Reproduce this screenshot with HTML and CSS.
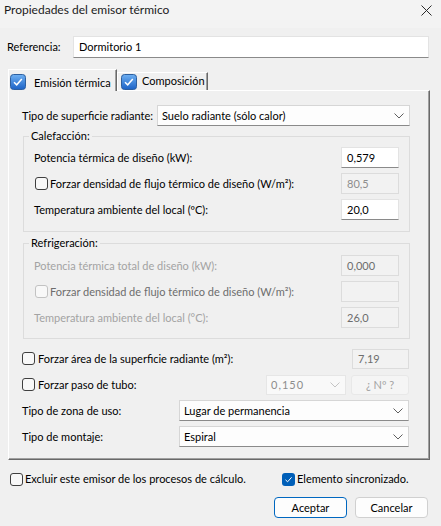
FILE: index.html
```html
<!DOCTYPE html>
<html>
<head>
    <meta charset="utf-8">
    <title>Propiedades del emisor térmico</title>
<link rel="stylesheet" href="styles.css">
</head>
<body>
    <div class="titlebar">
        <span>Propiedades del emisor térmico</span>
        <svg class="close" width="11" height="11" viewBox="0 0 11 11"><path d="M0.5 0.5 L10.5 10.5 M10.5 0.5 L0.5 10.5" stroke="#2b2b2b" stroke-width="1" fill="none"/></svg>
    </div>

    <div class="ref-row">
        <label>Referencia:</label>
        <div class="field ref-field">Dormitorio 1</div>
    </div>

    <!-- pestañas -->
    <div class="tabs">
        <div class="tab active">
            <svg class="tab-icon" width="16" height="16" viewBox="0 0 16 16">
                <defs><linearGradient id="tg" x1="0" y1="0" x2="0" y2="1"><stop offset="0" stop-color="#6fb0f2"/><stop offset="1" stop-color="#1c62c6"/></linearGradient></defs>
                <rect x="0.5" y="0.5" width="15" height="15" rx="3" fill="url(#tg)" stroke="#2d5f9f"/>
                <path d="M4 8.2 L6.7 10.8 L11.8 5" fill="none" stroke="#fff" stroke-width="1.5"/>
            </svg>
            <span>Emisión térmica</span>
        </div>
        <div class="tab">
            <svg class="tab-icon" width="16" height="16" viewBox="0 0 16 16">
                <rect x="0.5" y="0.5" width="15" height="15" rx="3" fill="url(#tg)" stroke="#2d5f9f"/>
                <path d="M4 8.2 L6.7 10.8 L11.8 5" fill="none" stroke="#fff" stroke-width="1.5"/>
            </svg>
            <span>Composición</span>
        </div>
    </div>

    <div class="panel">
        <div class="row">
            <span>Tipo de superficie radiante:</span>
            <div class="select surface">Suelo radiante (sólo calor)
                <svg width="10" height="6" viewBox="0 0 10 6"><path d="M0.5 0.5 L5 5 L9.5 0.5" stroke="#5f5f5f" fill="none"/></svg>
            </div>
        </div>

        <fieldset class="group heat">
            <legend>Calefacción:</legend>
            <div class="row">
                <span>Potencia térmica de diseño (kW):</span>
                <div class="field num">0,579</div>
            </div>
            <div class="row">
                <label class="check inset"><span class="box"></span>Forzar densidad de flujo térmico de diseño (W/m²):</label>
                <div class="field num off">80,5</div>
            </div>
            <div class="row">
                <span>Temperatura ambiente del local (ºC):</span>
                <div class="field num">20,0</div>
            </div>
        </fieldset>

        <fieldset class="group cool">
            <legend>Refrigeración:</legend>
            <div class="row grey">
                <span>Potencia térmica total de diseño (kW):</span>
                <div class="field num off dark">0,000</div>
            </div>
            <div class="row">
                <label class="check inset mid"><span class="box dis"></span>Forzar densidad de flujo térmico de diseño (W/m²):</label>
                <div class="field num off"></div>
            </div>
            <div class="row grey">
                <span>Temperatura ambiente del local (°C):</span>
                <div class="field num off dark">26,0</div>
            </div>
        </fieldset>

        <div class="opts">
            <div class="row">
                <label class="check"><span class="box"></span>Forzar área de la superficie radiante (m²):</label>
                <div class="field small off dark">7,19</div>
            </div>
            <div class="row">
                <label class="check"><span class="box"></span>Forzar paso de tubo:</label>
                <div class="pair">
                    <div class="select pitch">0,150
                        <svg width="10" height="6" viewBox="0 0 10 6"><path d="M0.5 0.5 L5 5 L9.5 0.5" stroke="#c4c4c4" fill="none"/></svg>
                    </div>
                    <div class="mini-btn">¿ Nº ?</div>
                </div>
            </div>
            <div class="row">
                <span>Tipo de zona de uso:</span>
                <div class="select long">Lugar de permanencia
                    <svg width="10" height="6" viewBox="0 0 10 6"><path d="M0.5 0.5 L5 5 L9.5 0.5" stroke="#5f5f5f" fill="none"/></svg>
                </div>
            </div>
            <div class="row">
                <span>Tipo de montaje:</span>
                <div class="select long">Espiral
                    <svg width="10" height="6" viewBox="0 0 10 6"><path d="M0.5 0.5 L5 5 L9.5 0.5" stroke="#5f5f5f" fill="none"/></svg>
                </div>
            </div>
        </div>
    </div>

    <div class="footer-checks">
        <label class="check"><span class="box"></span>Excluir este emisor de los procesos de cálculo.</label>
        <label class="check">
            <svg class="box-on" width="13" height="13" viewBox="0 0 13 13"><rect x="0" y="0" width="13" height="13" rx="3" fill="#005fb8"/><path d="M3.5 6.8 L5.6 8.8 L9.6 4.3" fill="none" stroke="#fff" stroke-width="1"/></svg>
            Elemento sincronizado.
        </label>
    </div>

    <div class="buttons">
        <div class="btn primary">Aceptar</div>
        <div class="btn">Cancelar</div>
    </div>
</body>
</html>
```

FILE: styles.css
```css
*{
    margin: 0;
    padding: 0;
    box-sizing: border-box;
}
body{
    width: 441px;
    height: 526px;
    overflow: hidden;
    background: #f0f0f0;
    font-family: "Segoe UI", Lato, sans-serif;
    font-size: 11px;
    line-height: 14px;
    color: #000;
    white-space: nowrap;
}
.titlebar{
    height: 28px;
    display: flex;
    justify-content: space-between;
    padding: 3px 9px 0 4px;
    background: #f3f3f3;
    color: #1b1b1b;
    font-size: 12px;
}
.close{margin-top: 2px;}

.ref-row{
    display: flex;
    align-items: center;
    margin-top: 8px;
    padding-left: 7px;
}
.ref-row label{width: 66px;}

.field{
    height: 21px;
    background: #fff;
    border: 1px solid #e3e3e3;
    border-bottom-color: #8a8a8a;
    padding: 0 5px;
    line-height: 19px;
}
.ref-field{
    width: 356px;
    height: 22px;
    line-height: 20px;
}
.field.num{width: 58px;}
.field.small{width: 57px; height: 20px; line-height: 18px;}
.field.off{
    background: #f2f2f2;
    border-color: #dcdcdc;
    color: #8d8d8d;
}
.field.off.dark{color: #6d6d6d;}

/* pestañas */
.tabs{
    display: flex;
    align-items: flex-end;
    height: 21px;
    margin-top: 11px;
    padding-left: 8px;
}
.tab{
    display: flex;
    align-items: center;
    height: 18px;
    width: 91px;
    padding-left: 3px;
    gap: 5px;
    border-top: 1px solid #fff;
    border-left: 1px solid #fff;
    border-right: 1px solid #696969;
    box-shadow: inset -1px 0 0 #a0a0a0;
}
.tab span{margin-bottom: 2px;}
.tab.active{
    position: relative;
    z-index: 1;
    width: 109px;
    height: 22px;
    margin-bottom: -1px;
    padding-left: 1px;
    padding-top: 2px;
    gap: 8px;
    background: #f0f0f0;
}
.tab.active span{margin: 2px 0 0;}

.panel{
    margin-left: 8px;
    width: 422px;
    height: 370px;
    border-top: 1px solid #fff;
    border-left: 1px solid #fff;
    border-right: 1px solid #696969;
    border-bottom: 1px solid #696969;
    box-shadow: inset -1px -1px 0 #a0a0a0;
    padding: 14px 19px 0 13px;
}

.row{
    display: flex;
    align-items: center;
    justify-content: space-between;
    height: 21px;
}
.row.grey{color: #a3a3a3;}

.select{
    display: flex;
    align-items: center;
    justify-content: space-between;
    height: 21px;
    background: #fdfdfd;
    border: 1px solid #d6d6d6;
    border-bottom-color: #8a8a8a;
    padding: 0 5px 0 4px;
}
.select.surface{width: 253px;}
.select.long{width: 230px;}
.select.pitch{
    width: 80px;
    height: 20px;
    border-color: #e6e6e6;
    background: #f9f9f9;
    color: #8d8d8d;
    letter-spacing: 1px;
}
.pair{
    display: flex;
    gap: 5px;
}
.mini-btn{
    width: 58px;
    height: 20px;
    line-height: 18px;
    text-align: center;
    background: #f5f5f5;
    border: 1px solid #e8e8e8;
    border-radius: 3px;
    color: #a3a3a3;
}

.group{
    margin: 3px 0 0 1px;
    border: 1px solid #dcdcdc;
    padding: 4px 10px 11px 10px;
    display: flex;
    flex-direction: column;
    gap: 5px;
}
.group.cool{
    margin-top: 4px;
    padding-top: 5px;
    padding-bottom: 10px;
}
.group legend{
    margin-left: -5px;
    padding: 0 2px;
    line-height: 14px;
}

.check{
    display: flex;
    align-items: center;
    gap: 3px;
}
.check.inset{margin-left: 1px; gap: 2px;}
.check.mid{color: #6d6d6d;}
.box{
    width: 13px;
    height: 13px;
    border: 1px solid #3f3f3f;
    border-radius: 3px;
    background: #f8f8f8;
}
.box.dis{border-color: #c2c2c2;}

.opts{
    margin-top: 9px;
    padding-right: 1px;
    display: flex;
    flex-direction: column;
    gap: 5px;
}

.footer-checks{
    display: grid;
    grid-template-columns: 272px auto;
    margin-top: 12px;
    padding-left: 10px;
    height: 13px;
}
.footer-checks .check{gap: 2px;}

.buttons{
    display: flex;
    justify-content: flex-end;
    gap: 8px;
    margin-top: 12px;
    padding-right: 13px;
}
.btn{
    width: 73px;
    height: 21px;
    line-height: 19px;
    text-align: center;
    background: #fdfdfd;
    border: 1px solid #d0d0d0;
    border-radius: 4px;
}
.btn.primary{border-color: #0067c0;}
```
